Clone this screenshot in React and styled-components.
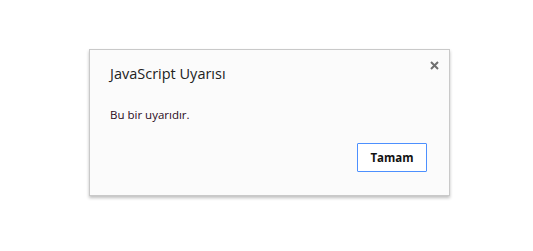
import React from 'react';
import styled, { createGlobalStyle } from 'styled-components';

const GlobalStyle = createGlobalStyle`
    html, body {
        margin: 0;
        padding: 0;
        background: #ffffff;
    }
    body {
        font-family: "Open Sans", "Liberation Sans", Arial, sans-serif;
    }
`;

const Page = styled.div`
    width: 533px;
    height: 251px;
    padding: 49px 0 0 89px;
    box-sizing: border-box;
`;

const Dialog = styled.div`
    position: relative;
    width: 361px;
    height: 147px;
    box-sizing: border-box;
    background: #fbfbfb;
    border: 1px solid #c9c9c9;
    box-shadow: 0 2px 3px rgba(0, 0, 0, 0.25);
    padding: 14px 20px 0 20px;
    display: flex;
    flex-direction: column;
`;

const Title = styled.h1`
    margin: 0;
    font-size: 14.5px;
    font-weight: 400;
    color: #222;
    line-height: 20px;
`;

const Message = styled.p`
    margin: 23px 0 0 0;
    font-size: 11.5px;
    color: #2a0a1a;
    line-height: 16px;
`;

const Close = styled.button`
    position: absolute;
    top: 8px;
    right: 8px;
    width: 14px;
    height: 14px;
    padding: 0;
    border: none;
    background: transparent;
    cursor: pointer;
    display: flex;
    align-items: center;
    justify-content: center;
`;

const Footer = styled.div`
    display: flex;
    justify-content: flex-end;
    margin-top: 20px;
    padding-right: 2px;
`;

const Button = styled.button`
    width: 70px;
    height: 29px;
    box-sizing: border-box;
    border: 1px solid #4d90fe;
    border-radius: 1px;
    background: #ffffff;
    font-family: "Open Sans", "Liberation Sans", Arial, sans-serif;
    font-weight: 700;
    font-size: 11.5px;
    color: #111;
    cursor: pointer;
`;

export default function App() {
    return (
        <>
            <GlobalStyle />
            <Page>
                <Dialog>
                    <Close aria-label="Kapat">
                        <svg width="9" height="9" viewBox="0 0 9 9">
                            <path d="M1 1 L8 8 M8 1 L1 8" stroke="#6f6f6f" strokeWidth="2" />
                        </svg>
                    </Close>
                    <Title>JavaScript Uyarısı</Title>
                    <Message>Bu bir uyarıdır.</Message>
                    <Footer>
                        <Button>Tamam</Button>
                    </Footer>
                </Dialog>
            </Page>
        </>
    );
}
